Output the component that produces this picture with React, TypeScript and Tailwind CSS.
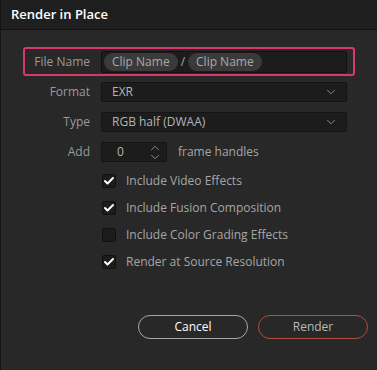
import { Check, ChevronDown, ChevronUp } from 'lucide-react';

const font = { fontFamily: '"Open Sans", "Noto Sans", sans-serif' };

function Chip({ children }: { children: React.ReactNode }) {
  return (
    <span className="h-[18px] px-[8px] rounded-full bg-[#3a3a3a] text-[#a9a9a9] text-[12px] leading-[18px] flex items-center">
      {children}
    </span>
  );
}

function Row({ label, children, className = '' }: { label: string; children: React.ReactNode; className?: string }) {
  return (
    <div className={`flex items-center border-2 border-transparent pr-[6px] ${className}`}>
      <div className="w-[65px] text-right text-[12px] text-[#9a9a9a] shrink-0">{label}</div>
      <div className="ml-[11px] flex-1 flex items-center">{children}</div>
    </div>
  );
}

function Select({ value }: { value: string }) {
  return (
    <div className="h-[20px] w-full bg-[#1c1c1c] border border-[#141414] rounded-[2px] flex items-center pl-[10px] pr-[8px] text-[12px] text-[#b4b4b4]">
      <span className="flex-1">{value}</span>
      <ChevronDown size={14} strokeWidth={1.5} className="text-[#9a9a9a]" />
    </div>
  );
}

function CheckRow({ label, checked }: { label: string; checked: boolean }) {
  return (
    <div className="flex items-center pl-[101px] h-[14px]">
      <div className="w-[14px] h-[14px] bg-[#1c1c1c] border border-[#111] rounded-[2px] flex items-center justify-center">
        {checked && <Check size={12} strokeWidth={4} className="text-white" />}
      </div>
      <span className="ml-[10px] text-[12px] text-[#a6a6a6]">{label}</span>
    </div>
  );
}

export default function App() {
  return (
    <div className="w-[377px] h-[370px] bg-[#282828] border-l border-[#151515] flex flex-col" style={font}>
      <div className="h-[30px] bg-[#1f1f1f] border-b border-[#121212] flex items-center pl-[10px]">
        <span className="text-[13px] font-semibold text-white">Render in Place</span>
      </div>

      <div className="pl-[22px] pr-[22px] flex flex-col">
        <Row label="File Name" className="mt-[17px] h-[29px] !border-[#d8386a] rounded-[3px]">
          <div className="h-[22px] w-full bg-[#1c1c1c] border border-[#111] rounded-[2px] flex items-center pl-[2px] gap-[3px]">
            <Chip>Clip Name</Chip>
            <span className="text-[12px] text-[#a9a9a9]">/</span>
            <Chip>Clip Name</Chip>
          </div>
        </Row>

        <Row label="Format" className="mt-[4px] h-[24px]">
          <Select value="EXR" />
        </Row>

        <Row label="Type" className="mt-[6px] h-[24px]">
          <Select value="RGB half (DWAA)" />
        </Row>

        <Row label="Add" className="mt-[6px] h-[24px]">
          <div className="h-[20px] w-[66px] bg-[#1c1c1c] border border-[#141414] rounded-[2px] flex items-center pl-[15px] pr-[4px] text-[12px] text-[#b4b4b4]">
            <span className="flex-1">0</span>
            <div className="flex flex-col items-center text-[#9a9a9a] -space-y-[5px]">
              <ChevronUp size={14} strokeWidth={1.5} />
              <ChevronDown size={14} strokeWidth={1.5} />
            </div>
          </div>
          <span className="ml-[11px] text-[12px] text-[#a6a6a6]">frame handles</span>
        </Row>
      </div>

      <div className="flex flex-col gap-[13px] mt-[10px]">
        <CheckRow label="Include Video Effects" checked />
        <CheckRow label="Include Fusion Composition" checked />
        <CheckRow label="Include Color Grading Effects" checked={false} />
        <CheckRow label="Render at Source Resolution" checked />
      </div>

      <div className="flex justify-end gap-[10px] pr-[9px] mt-[46px]">
        <button className="w-[110px] h-[24px] rounded-full border border-[#a8a8a8] text-[12px] text-white">Cancel</button>
        <button className="w-[110px] h-[24px] rounded-full border border-[#b24a40] text-[12px] text-[#b8b8b8]">Render</button>
      </div>
    </div>
  );
}
